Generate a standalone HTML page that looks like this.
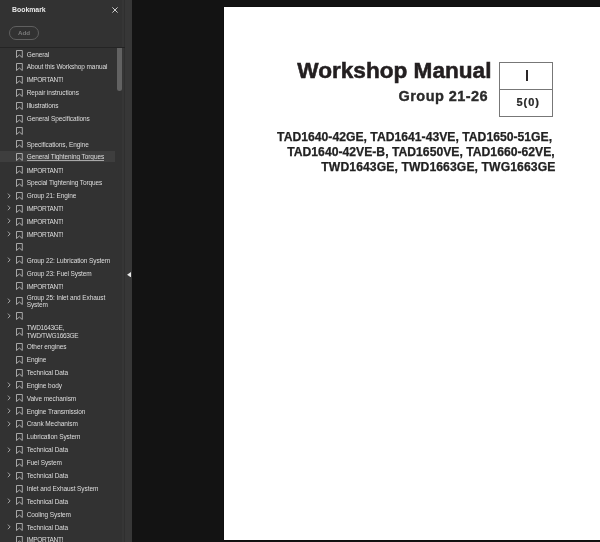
<!DOCTYPE html>
<html><head><meta charset="utf-8"><style>
html,body{margin:0;padding:0;width:600px;height:542px;overflow:hidden;background:#131313;font-family:"Liberation Sans",sans-serif;}
#wrap{position:absolute;left:0;top:0;width:600px;height:542px;will-change:transform}
#panel{position:absolute;left:0;top:0;width:122px;height:542px;background:#323232;overflow:hidden}
#s1{position:absolute;left:121.6px;top:0;width:2.6px;height:542px;background:#363636}
#s2{position:absolute;left:124.2px;top:0;width:1.2px;height:542px;background:#2f2f2f}
#s3{position:absolute;left:125.4px;top:0;width:6.8px;height:542px;background:#373737}
#sep{position:absolute;left:0;top:46.8px;width:125.4px;height:1.2px;background:#242424}
#title{position:absolute;left:12px;top:5.6px;font-size:6.9px;font-weight:bold;color:#e8e8e8}
#close{position:absolute;left:112px;top:6.9px;width:6px;height:6px}
#add{position:absolute;left:9px;top:26px;width:28px;height:11.5px;border:1.2px solid #606060;border-radius:7px;color:#7c7c7c;font-weight:bold;font-size:6.2px;text-align:center;line-height:11.8px}
.row{position:absolute;left:0;width:122px;height:0}
.row .bm{position:absolute;left:15.7px;top:-3.9px;width:7px;height:8px}
.row .chev{position:absolute;left:6.5px;top:-3.2px;width:4px;height:6px}
.row .t{position:absolute;left:26.7px;top:-3.5px;font-size:6.5px;line-height:7.5px;color:#dedede;white-space:nowrap;letter-spacing:-0.09px}
.row.two .t{top:-7.3px}
.row.sel::before{content:"";position:absolute;left:0;top:-6.3px;width:114.7px;height:11.6px;background:#3e3e3e}
.row.sel .t{top:-3.9px}
.row.sel .t::after{content:"";position:absolute;left:0;right:0.3px;top:6.4px;height:0.7px;background:#a8a8a8}
#scroll{position:absolute;left:116.9px;top:47.5px;width:5.1px;height:43.5px;background:#626262;border-radius:0 0 2.5px 2.5px}
#collapse{position:absolute;left:127px;top:271.6px;width:4.1px;height:5.4px}
#page{position:absolute;left:223.5px;top:6.8px;width:400px;height:533px;background:#fff;box-shadow:0 0 1px #000}
.pt{position:absolute;white-space:nowrap;color:#231f20;font-weight:bold;line-height:1}
.ml{-webkit-text-stroke:0.25px #222}
</style></head><body><div id="wrap">
<div id="panel">
<div class="row" style="top:54.00px"><svg class="bm" viewBox="0 0 7 8"><path d="M0.5 0.5 H6.3 V7.5 L3.4 5.0 L0.5 7.5 Z" fill="none" stroke="#c4c4c4" stroke-width="0.8" stroke-linejoin="miter"/></svg><span class="t">General</span></div><div class="row" style="top:66.89px"><svg class="bm" viewBox="0 0 7 8"><path d="M0.5 0.5 H6.3 V7.5 L3.4 5.0 L0.5 7.5 Z" fill="none" stroke="#c4c4c4" stroke-width="0.8" stroke-linejoin="miter"/></svg><span class="t">About this Workshop manual</span></div><div class="row" style="top:79.78px"><svg class="bm" viewBox="0 0 7 8"><path d="M0.5 0.5 H6.3 V7.5 L3.4 5.0 L0.5 7.5 Z" fill="none" stroke="#c4c4c4" stroke-width="0.8" stroke-linejoin="miter"/></svg><span class="t" style="letter-spacing:-0.3px">IMPORTANT!</span></div><div class="row" style="top:92.67px"><svg class="bm" viewBox="0 0 7 8"><path d="M0.5 0.5 H6.3 V7.5 L3.4 5.0 L0.5 7.5 Z" fill="none" stroke="#c4c4c4" stroke-width="0.8" stroke-linejoin="miter"/></svg><span class="t">Repair instructions</span></div><div class="row" style="top:105.56px"><svg class="bm" viewBox="0 0 7 8"><path d="M0.5 0.5 H6.3 V7.5 L3.4 5.0 L0.5 7.5 Z" fill="none" stroke="#c4c4c4" stroke-width="0.8" stroke-linejoin="miter"/></svg><span class="t">Illustrations</span></div><div class="row" style="top:118.45px"><svg class="bm" viewBox="0 0 7 8"><path d="M0.5 0.5 H6.3 V7.5 L3.4 5.0 L0.5 7.5 Z" fill="none" stroke="#c4c4c4" stroke-width="0.8" stroke-linejoin="miter"/></svg><span class="t">General Specifications</span></div><div class="row" style="top:131.34px"><svg class="bm" viewBox="0 0 7 8"><path d="M0.5 0.5 H6.3 V7.5 L3.4 5.0 L0.5 7.5 Z" fill="none" stroke="#c4c4c4" stroke-width="0.8" stroke-linejoin="miter"/></svg><span class="t"></span></div><div class="row" style="top:144.23px"><svg class="bm" viewBox="0 0 7 8"><path d="M0.5 0.5 H6.3 V7.5 L3.4 5.0 L0.5 7.5 Z" fill="none" stroke="#c4c4c4" stroke-width="0.8" stroke-linejoin="miter"/></svg><span class="t">Specifications, Engine</span></div><div class="row sel" style="top:157.12px"><svg class="bm" viewBox="0 0 7 8"><path d="M0.5 0.5 H6.3 V7.5 L3.4 5.0 L0.5 7.5 Z" fill="none" stroke="#c4c4c4" stroke-width="0.8" stroke-linejoin="miter"/></svg><span class="t">General Tightening Torques</span></div><div class="row" style="top:170.01px"><svg class="bm" viewBox="0 0 7 8"><path d="M0.5 0.5 H6.3 V7.5 L3.4 5.0 L0.5 7.5 Z" fill="none" stroke="#c4c4c4" stroke-width="0.8" stroke-linejoin="miter"/></svg><span class="t" style="letter-spacing:-0.3px">IMPORTANT!</span></div><div class="row" style="top:182.90px"><svg class="bm" viewBox="0 0 7 8"><path d="M0.5 0.5 H6.3 V7.5 L3.4 5.0 L0.5 7.5 Z" fill="none" stroke="#c4c4c4" stroke-width="0.8" stroke-linejoin="miter"/></svg><span class="t">Special Tightening Torques</span></div><div class="row" style="top:195.79px"><svg class="chev" viewBox="0 0 4 6"><path d="M0.9 0.6 L3.1 2.9 L0.9 5.2" fill="none" stroke="#aaaaaa" stroke-width="0.95"/></svg><svg class="bm" viewBox="0 0 7 8"><path d="M0.5 0.5 H6.3 V7.5 L3.4 5.0 L0.5 7.5 Z" fill="none" stroke="#c4c4c4" stroke-width="0.8" stroke-linejoin="miter"/></svg><span class="t">Group 21: Engine</span></div><div class="row" style="top:208.68px"><svg class="chev" viewBox="0 0 4 6"><path d="M0.9 0.6 L3.1 2.9 L0.9 5.2" fill="none" stroke="#aaaaaa" stroke-width="0.95"/></svg><svg class="bm" viewBox="0 0 7 8"><path d="M0.5 0.5 H6.3 V7.5 L3.4 5.0 L0.5 7.5 Z" fill="none" stroke="#c4c4c4" stroke-width="0.8" stroke-linejoin="miter"/></svg><span class="t" style="letter-spacing:-0.3px">IMPORTANT!</span></div><div class="row" style="top:221.57px"><svg class="chev" viewBox="0 0 4 6"><path d="M0.9 0.6 L3.1 2.9 L0.9 5.2" fill="none" stroke="#aaaaaa" stroke-width="0.95"/></svg><svg class="bm" viewBox="0 0 7 8"><path d="M0.5 0.5 H6.3 V7.5 L3.4 5.0 L0.5 7.5 Z" fill="none" stroke="#c4c4c4" stroke-width="0.8" stroke-linejoin="miter"/></svg><span class="t" style="letter-spacing:-0.3px">IMPORTANT!</span></div><div class="row" style="top:234.46px"><svg class="chev" viewBox="0 0 4 6"><path d="M0.9 0.6 L3.1 2.9 L0.9 5.2" fill="none" stroke="#aaaaaa" stroke-width="0.95"/></svg><svg class="bm" viewBox="0 0 7 8"><path d="M0.5 0.5 H6.3 V7.5 L3.4 5.0 L0.5 7.5 Z" fill="none" stroke="#c4c4c4" stroke-width="0.8" stroke-linejoin="miter"/></svg><span class="t" style="letter-spacing:-0.3px">IMPORTANT!</span></div><div class="row" style="top:247.35px"><svg class="bm" viewBox="0 0 7 8"><path d="M0.5 0.5 H6.3 V7.5 L3.4 5.0 L0.5 7.5 Z" fill="none" stroke="#c4c4c4" stroke-width="0.8" stroke-linejoin="miter"/></svg><span class="t"></span></div><div class="row" style="top:260.24px"><svg class="chev" viewBox="0 0 4 6"><path d="M0.9 0.6 L3.1 2.9 L0.9 5.2" fill="none" stroke="#aaaaaa" stroke-width="0.95"/></svg><svg class="bm" viewBox="0 0 7 8"><path d="M0.5 0.5 H6.3 V7.5 L3.4 5.0 L0.5 7.5 Z" fill="none" stroke="#c4c4c4" stroke-width="0.8" stroke-linejoin="miter"/></svg><span class="t">Group 22: Lubrication System</span></div><div class="row" style="top:273.13px"><svg class="bm" viewBox="0 0 7 8"><path d="M0.5 0.5 H6.3 V7.5 L3.4 5.0 L0.5 7.5 Z" fill="none" stroke="#c4c4c4" stroke-width="0.8" stroke-linejoin="miter"/></svg><span class="t">Group 23: Fuel System</span></div><div class="row" style="top:286.02px"><svg class="bm" viewBox="0 0 7 8"><path d="M0.5 0.5 H6.3 V7.5 L3.4 5.0 L0.5 7.5 Z" fill="none" stroke="#c4c4c4" stroke-width="0.8" stroke-linejoin="miter"/></svg><span class="t" style="letter-spacing:-0.3px">IMPORTANT!</span></div><div class="row two" style="top:301.17px"><svg class="chev" viewBox="0 0 4 6"><path d="M0.9 0.6 L3.1 2.9 L0.9 5.2" fill="none" stroke="#aaaaaa" stroke-width="0.95"/></svg><svg class="bm" viewBox="0 0 7 8"><path d="M0.5 0.5 H6.3 V7.5 L3.4 5.0 L0.5 7.5 Z" fill="none" stroke="#c4c4c4" stroke-width="0.8" stroke-linejoin="miter"/></svg><span class="t">Group 25: Inlet and Exhaust<br>System</span></div><div class="row" style="top:316.32px"><svg class="chev" viewBox="0 0 4 6"><path d="M0.9 0.6 L3.1 2.9 L0.9 5.2" fill="none" stroke="#aaaaaa" stroke-width="0.95"/></svg><svg class="bm" viewBox="0 0 7 8"><path d="M0.5 0.5 H6.3 V7.5 L3.4 5.0 L0.5 7.5 Z" fill="none" stroke="#c4c4c4" stroke-width="0.8" stroke-linejoin="miter"/></svg><span class="t"></span></div><div class="row two" style="top:331.47px"><svg class="bm" viewBox="0 0 7 8"><path d="M0.5 0.5 H6.3 V7.5 L3.4 5.0 L0.5 7.5 Z" fill="none" stroke="#c4c4c4" stroke-width="0.8" stroke-linejoin="miter"/></svg><span class="t" style="letter-spacing:-0.3px">TWD1643GE,<br>TWD/TWG1663GE</span></div><div class="row" style="top:346.62px"><svg class="bm" viewBox="0 0 7 8"><path d="M0.5 0.5 H6.3 V7.5 L3.4 5.0 L0.5 7.5 Z" fill="none" stroke="#c4c4c4" stroke-width="0.8" stroke-linejoin="miter"/></svg><span class="t">Other engines</span></div><div class="row" style="top:359.51px"><svg class="bm" viewBox="0 0 7 8"><path d="M0.5 0.5 H6.3 V7.5 L3.4 5.0 L0.5 7.5 Z" fill="none" stroke="#c4c4c4" stroke-width="0.8" stroke-linejoin="miter"/></svg><span class="t">Engine</span></div><div class="row" style="top:372.40px"><svg class="bm" viewBox="0 0 7 8"><path d="M0.5 0.5 H6.3 V7.5 L3.4 5.0 L0.5 7.5 Z" fill="none" stroke="#c4c4c4" stroke-width="0.8" stroke-linejoin="miter"/></svg><span class="t">Technical Data</span></div><div class="row" style="top:385.29px"><svg class="chev" viewBox="0 0 4 6"><path d="M0.9 0.6 L3.1 2.9 L0.9 5.2" fill="none" stroke="#aaaaaa" stroke-width="0.95"/></svg><svg class="bm" viewBox="0 0 7 8"><path d="M0.5 0.5 H6.3 V7.5 L3.4 5.0 L0.5 7.5 Z" fill="none" stroke="#c4c4c4" stroke-width="0.8" stroke-linejoin="miter"/></svg><span class="t">Engine body</span></div><div class="row" style="top:398.18px"><svg class="chev" viewBox="0 0 4 6"><path d="M0.9 0.6 L3.1 2.9 L0.9 5.2" fill="none" stroke="#aaaaaa" stroke-width="0.95"/></svg><svg class="bm" viewBox="0 0 7 8"><path d="M0.5 0.5 H6.3 V7.5 L3.4 5.0 L0.5 7.5 Z" fill="none" stroke="#c4c4c4" stroke-width="0.8" stroke-linejoin="miter"/></svg><span class="t">Valve mechanism</span></div><div class="row" style="top:411.07px"><svg class="chev" viewBox="0 0 4 6"><path d="M0.9 0.6 L3.1 2.9 L0.9 5.2" fill="none" stroke="#aaaaaa" stroke-width="0.95"/></svg><svg class="bm" viewBox="0 0 7 8"><path d="M0.5 0.5 H6.3 V7.5 L3.4 5.0 L0.5 7.5 Z" fill="none" stroke="#c4c4c4" stroke-width="0.8" stroke-linejoin="miter"/></svg><span class="t">Engine Transmission</span></div><div class="row" style="top:423.96px"><svg class="chev" viewBox="0 0 4 6"><path d="M0.9 0.6 L3.1 2.9 L0.9 5.2" fill="none" stroke="#aaaaaa" stroke-width="0.95"/></svg><svg class="bm" viewBox="0 0 7 8"><path d="M0.5 0.5 H6.3 V7.5 L3.4 5.0 L0.5 7.5 Z" fill="none" stroke="#c4c4c4" stroke-width="0.8" stroke-linejoin="miter"/></svg><span class="t">Crank Mechanism</span></div><div class="row" style="top:436.85px"><svg class="bm" viewBox="0 0 7 8"><path d="M0.5 0.5 H6.3 V7.5 L3.4 5.0 L0.5 7.5 Z" fill="none" stroke="#c4c4c4" stroke-width="0.8" stroke-linejoin="miter"/></svg><span class="t">Lubrication System</span></div><div class="row" style="top:449.74px"><svg class="chev" viewBox="0 0 4 6"><path d="M0.9 0.6 L3.1 2.9 L0.9 5.2" fill="none" stroke="#aaaaaa" stroke-width="0.95"/></svg><svg class="bm" viewBox="0 0 7 8"><path d="M0.5 0.5 H6.3 V7.5 L3.4 5.0 L0.5 7.5 Z" fill="none" stroke="#c4c4c4" stroke-width="0.8" stroke-linejoin="miter"/></svg><span class="t">Technical Data</span></div><div class="row" style="top:462.63px"><svg class="bm" viewBox="0 0 7 8"><path d="M0.5 0.5 H6.3 V7.5 L3.4 5.0 L0.5 7.5 Z" fill="none" stroke="#c4c4c4" stroke-width="0.8" stroke-linejoin="miter"/></svg><span class="t">Fuel System</span></div><div class="row" style="top:475.52px"><svg class="chev" viewBox="0 0 4 6"><path d="M0.9 0.6 L3.1 2.9 L0.9 5.2" fill="none" stroke="#aaaaaa" stroke-width="0.95"/></svg><svg class="bm" viewBox="0 0 7 8"><path d="M0.5 0.5 H6.3 V7.5 L3.4 5.0 L0.5 7.5 Z" fill="none" stroke="#c4c4c4" stroke-width="0.8" stroke-linejoin="miter"/></svg><span class="t">Technical Data</span></div><div class="row" style="top:488.41px"><svg class="bm" viewBox="0 0 7 8"><path d="M0.5 0.5 H6.3 V7.5 L3.4 5.0 L0.5 7.5 Z" fill="none" stroke="#c4c4c4" stroke-width="0.8" stroke-linejoin="miter"/></svg><span class="t">Inlet and Exhaust System</span></div><div class="row" style="top:501.30px"><svg class="chev" viewBox="0 0 4 6"><path d="M0.9 0.6 L3.1 2.9 L0.9 5.2" fill="none" stroke="#aaaaaa" stroke-width="0.95"/></svg><svg class="bm" viewBox="0 0 7 8"><path d="M0.5 0.5 H6.3 V7.5 L3.4 5.0 L0.5 7.5 Z" fill="none" stroke="#c4c4c4" stroke-width="0.8" stroke-linejoin="miter"/></svg><span class="t">Technical Data</span></div><div class="row" style="top:514.19px"><svg class="bm" viewBox="0 0 7 8"><path d="M0.5 0.5 H6.3 V7.5 L3.4 5.0 L0.5 7.5 Z" fill="none" stroke="#c4c4c4" stroke-width="0.8" stroke-linejoin="miter"/></svg><span class="t">Cooling System</span></div><div class="row" style="top:527.08px"><svg class="chev" viewBox="0 0 4 6"><path d="M0.9 0.6 L3.1 2.9 L0.9 5.2" fill="none" stroke="#aaaaaa" stroke-width="0.95"/></svg><svg class="bm" viewBox="0 0 7 8"><path d="M0.5 0.5 H6.3 V7.5 L3.4 5.0 L0.5 7.5 Z" fill="none" stroke="#c4c4c4" stroke-width="0.8" stroke-linejoin="miter"/></svg><span class="t">Technical Data</span></div><div class="row" style="top:539.97px"><svg class="bm" viewBox="0 0 7 8"><path d="M0.5 0.5 H6.3 V7.5 L3.4 5.0 L0.5 7.5 Z" fill="none" stroke="#c4c4c4" stroke-width="0.8" stroke-linejoin="miter"/></svg><span class="t" style="letter-spacing:-0.3px">IMPORTANT!</span></div>
<div id="title">Bookmark</div>
<svg id="close" viewBox="0 0 6 6"><path d="M0.4 0.4 L5.6 5.6 M5.6 0.4 L0.4 5.6" stroke="#cdcdcd" stroke-width="1"/></svg>
<div id="add">Add</div>
<div id="scroll"></div>
</div>
<div id="s1"></div><div id="s2"></div><div id="s3"></div>
<div id="sep"></div>
<svg id="collapse" viewBox="0 0 4 5.4"><path d="M4 0 L0 2.7 L4 5.4 Z" fill="#e8e8e8"/></svg>
<div id="page">
<div class="pt" style="left:73.8px;top:53.2px;font-size:22.6px;-webkit-text-stroke:0.55px #231f20">Workshop Manual</div>
<div class="pt" style="left:175.0px;top:82.3px;font-size:14.5px;letter-spacing:0.45px;color:#2b2b2b;-webkit-text-stroke:0.35px #2b2b2b">Group 21-26</div>
<div style="position:absolute;left:275.35px;top:55px;width:54.15px;height:55.1px;border:1.1px solid #777;box-sizing:border-box"></div>
<div style="position:absolute;left:275.35px;top:81.9px;width:54.15px;height:1.1px;background:#777"></div>
<div style="position:absolute;left:302.6px;top:63.4px;width:2.1px;height:10.8px;background:#2a2628"></div>
<div class="pt" style="left:293.0px;top:90.4px;font-size:11px;letter-spacing:0.95px;color:#262626;-webkit-text-stroke:0.22px #262626">5(0)</div>
<div class="pt" style="left:53.6px;top:124px;font-size:12.2px;color:#222;-webkit-text-stroke:0.25px #222">TAD1640-42GE, TAD1641-43VE, TAD1650-51GE,</div>
<div class="pt" style="left:63.7px;top:139.2px;font-size:12.2px;color:#222;-webkit-text-stroke:0.25px #222">TAD1640-42VE-B, TAD1650VE, TAD1660-62VE,</div>
<div class="pt" style="left:97.8px;top:154.5px;font-size:12.2px;letter-spacing:0.08px;color:#222;-webkit-text-stroke:0.25px #222">TWD1643GE, TWD1663GE, TWG1663GE</div>
</div>
</div></body></html>
